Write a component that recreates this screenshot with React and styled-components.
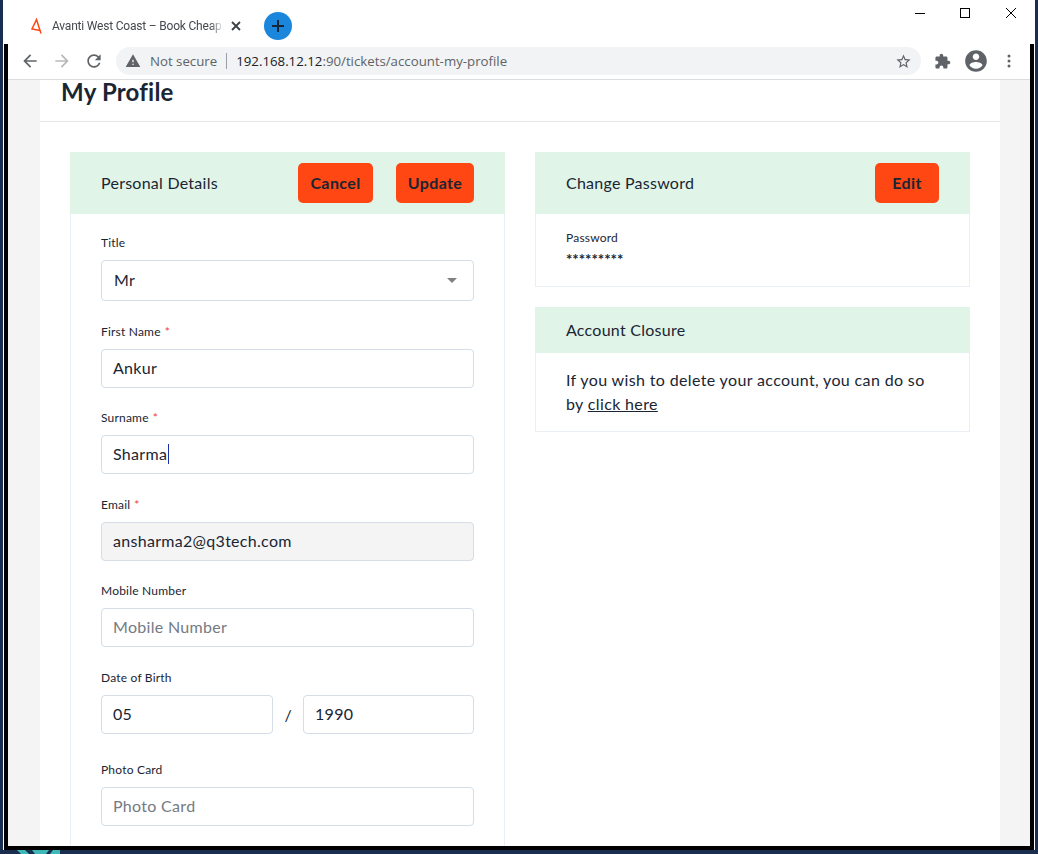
import React from "react";
import styled, { createGlobalStyle } from "styled-components";

const Global = createGlobalStyle`
  html, body { margin: 0; padding: 0; background: #1a2f4f; }
  * { box-sizing: border-box; }
`;

const ICONS = {
  back: "M20 11H7.83l5.59-5.59L12 4l-8 8 8 8 1.41-1.41L7.83 13H20v-2z",
  forward: "M12 4l-1.41 1.41L16.17 11H4v2h12.17l-5.58 5.59L12 20l8-8z",
  reload: "M17.65 6.35C16.2 4.9 14.21 4 12 4c-4.42 0-7.99 3.58-7.99 8s3.57 8 7.99 8c3.73 0 6.84-2.55 7.73-6h-2.08c-.82 2.33-3.04 4-5.65 4-3.31 0-6-2.69-6-6s2.69-6 6-6c1.66 0 3.14.69 4.22 1.78L13 11h7V4l-2.35 2.35z",
  warning: "M1 21h22L12 2 1 21zm12-3h-2v-2h2v2zm0-4h-2v-4h2v4z",
  star: "M22 9.24l-7.19-.62L12 2 9.19 8.63 2 9.24l5.46 4.73L5.82 21 12 17.27 18.18 21l-1.63-7.03L22 9.24zM12 15.4l-3.76 2.27 1-4.28-3.32-2.88 4.38-.38L12 6.1l1.71 4.04 4.38.38-3.32 2.88 1 4.28L12 15.4z",
  puzzle: "M20.5 11H19V7c0-1.1-.9-2-2-2h-4V3.5C13 2.12 11.88 1 10.5 1S8 2.12 8 3.5V5H4c-1.1 0-1.99.9-1.99 2v3.8H3.5c1.49 0 2.7 1.21 2.7 2.7s-1.21 2.7-2.7 2.7H2V20c0 1.1.9 2 2 2h3.8v-1.5c0-1.49 1.21-2.7 2.7-2.7 1.49 0 2.7 1.21 2.7 2.7V22H17c1.1 0 2-.9 2-2v-4h1.5c1.38 0 2.5-1.12 2.5-2.5S21.88 11 20.5 11z",
  account: "M12 2C6.48 2 2 6.48 2 12s4.48 10 10 10 10-4.48 10-10S17.52 2 12 2zm0 3c1.66 0 3 1.34 3 3s-1.34 3-3 3-3-1.34-3-3 1.34-3 3-3zm0 14.2c-2.5 0-4.71-1.28-6-3.22.03-1.99 4-3.08 6-3.08 1.99 0 5.97 1.09 6 3.08-1.29 1.94-3.5 3.22-6 3.22z",
};

const Glyph = ({ name, size = 20, color = "#5f6368" }) => (
  <svg width={size} height={size} viewBox="0 0 24 24" fill={color}>
    <path d={ICONS[name]} />
  </svg>
);

const Desktop = styled.div`
  width: 1038px;
  height: 854px;
  background: #1a2f4f;
  padding: 0 3px;
  overflow: hidden;
`;
const Win = styled.div`
  width: 1032px;
  height: 850px;
  background: #fff;
  padding: 0 1px;
  display: flex;
  flex-direction: column;
`;
const WallpaperStrip = styled.svg`
  display: block;
  margin-left: 14px;
`;
const TabStrip = styled.div`
  height: 44px;
  flex: none;
  display: flex;
  align-items: flex-start;
`;
const Tab = styled.div`
  height: 44px;
  margin-left: 25px;
  display: flex;
  align-items: center;
  padding-top: 8px;
`;
const TabTitle = styled.span`
  width: 172px;
  margin-left: 9px;
  font: 12px "Roboto", sans-serif;
  letter-spacing: -0.2px;
  color: #45494e;
  white-space: nowrap;
  overflow: hidden;
  -webkit-mask-image: linear-gradient(to right, #000 92%, transparent);
  mask-image: linear-gradient(to right, #000 92%, transparent);
`;
const TabClose = styled.svg`
  margin-left: 7px;
`;
const NewTab = styled.div`
  width: 28px;
  height: 28px;
  margin: 12px 0 0 23px;
  border-radius: 50%;
  background: #1a86dc;
  display: flex;
  align-items: center;
  justify-content: center;
`;
const WinControls = styled.div`
  margin-left: auto;
  display: flex;
  padding-top: 8px;
  padding-right: 18px;
  gap: 35px;
`;
const CloseControl = styled.svg`
  margin-left: 1px;
`;
const Frame = styled.div`
  flex: 1;
  min-height: 0;
  display: flex;
  flex-direction: column;
  border: 4px solid #000;
  border-top: none;
`;
const Toolbar = styled.div`
  height: 36px;
  flex: none;
  display: flex;
  align-items: flex-start;
  padding: 3px 5px 0 6px;
  border-bottom: 1px solid #dadce0;
`;
const IconSlot = styled.div`
  width: ${(p) => p.$w || 32}px;
  height: 28px;
  flex: none;
  display: flex;
  align-items: center;
  justify-content: center;
`;
const Omnibox = styled.div`
  flex: 1;
  height: 28px;
  margin: 0 5px 0 6px;
  padding: 0 9px 0 9px;
  border-radius: 14px;
  background: #f1f3f4;
  display: flex;
  align-items: center;
  font: 13.25px "Open Sans", sans-serif;
`;
const Security = styled.span`
  margin-left: 9px;
  color: #5f6368;
`;
const Divider = styled.span`
  width: 1px;
  height: 16px;
  background: #9aa0a6;
  margin: 0 9px;
`;
const Host = styled.span`
  color: #202124;
`;
const UrlRest = styled.span`
  color: #5f6368;
`;
const StarWrap = styled.div`
  margin-left: auto;
  display: flex;
`;
const Page = styled.main`
  flex: 1;
  min-height: 0;
  overflow: hidden;
  background: #f4f4f4;
  padding: 0 30px 0 32px;
  font-family: "Lato", sans-serif;
  color: #1a2533;
`;
const Card = styled.div`
  background: #fff;
  height: 100%;
`;
const PageHead = styled.h1`
  margin: 0;
  height: 42px;
  padding: 0 21px;
  font-size: 24px;
  line-height: 24px;
  font-weight: 700;
  letter-spacing: 0.2px;
  border-bottom: 1px solid #e6e6e6;
`;
const Columns = styled.div`
  display: grid;
  grid-template-columns: 435px 435px;
  gap: 30px;
  align-items: start;
  padding: 30px 30px 0;
`;
const Stack = styled.div`
  display: flex;
  flex-direction: column;
  gap: 20px;
`;
const PanelHead = styled.div`
  height: ${(p) => p.$h}px;
  background: #e1f4e8;
  display: flex;
  align-items: center;
  padding: 0 31px;
`;
const PanelTitle = styled.h2`
  margin: 0 auto 0 0;
  padding-bottom: 2px;
  font-size: 16px;
  font-weight: 400;
  letter-spacing: 0.25px;
`;
const Action = styled.button`
  height: 40px;
  width: ${(p) => p.$w}px;
  margin-left: ${(p) => p.$gap || 0}px;
  border: none;
  border-radius: 5px;
  background: #ff4713;
  color: #1a2533;
  font: 700 16px "Lato", sans-serif;
  letter-spacing: 0.4px;
  padding: 0 0 2px;
`;
const PanelBody = styled.div`
  border: 1px solid #e9eff5;
  border-top: none;
  padding: ${(p) => p.$pad};
`;
const Group = styled.div`
  margin-bottom: ${(p) => p.$mb ?? 21.5}px;
`;
const Label = styled.label`
  display: block;
  font-size: 12px;
  line-height: 18px;
  letter-spacing: 0.2px;
  margin-bottom: 8px;
`;
const Required = styled.span`
  color: #f03a3a;
  margin-left: 4px;
`;
const Field = styled.div`
  height: ${(p) => p.$h || 39}px;
  width: ${(p) => p.$w || "100%"};
  flex: ${(p) => (p.$grow ? 1 : "none")};
  border: 1px solid #d5dde6;
  border-radius: 4px;
  background: ${(p) => (p.$disabled ? "#f4f4f4" : "#fff")};
  color: ${(p) => (p.$placeholder ? "#757a82" : "#1a2533")};
  font-size: 16px;
  letter-spacing: 0.3px;
  padding: 0 11px 2px;
  display: flex;
  align-items: center;
`;
const SelectField = styled(Field)`
  padding: 0 16px 2px 12px;
  justify-content: space-between;
`;
const Arrow = styled.span`
  width: 0;
  height: 0;
  margin-top: 2px;
  border-left: 5.5px solid transparent;
  border-right: 5.5px solid transparent;
  border-top: 5px solid #808080;
`;
const Caret = styled.span`
  width: 1px;
  height: 20px;
  margin-left: 1px;
  background: #1c2fa8;
`;
const DateRow = styled.div`
  display: flex;
  align-items: center;
`;
const Slash = styled.span`
  width: 30px;
  flex: none;
  text-align: center;
  font-size: 16px;
`;
const SmallLabel = styled.div`
  font-size: 12px;
  line-height: 18px;
  letter-spacing: 0.2px;
`;
const Stars = styled.div`
  margin-top: 2px;
  font-size: 15px;
  line-height: 20px;
  font-weight: 700;
`;
const Para = styled.p`
  margin: 0;
  font-size: 16px;
  line-height: 24px;
  letter-spacing: 0.36px;
`;
const Link = styled.a`
  color: inherit;
  text-decoration: underline;
`;

export default function App() {
  return (
    <>
      <Global />
      <Desktop>
        <Win>
          <TabStrip>
            <Tab>
              <svg width="14" height="16" viewBox="0 0 14 16" fill="none" stroke="#ff4713" strokeWidth="1.5">
                <path d="M7.5 1.5 L3 11 L11 12.5 Z M11 12.5 L12 15.5" />
              </svg>
              <TabTitle>Avanti West Coast – Book Cheap Train Tickets</TabTitle>
              <TabClose width="10" height="10" viewBox="0 0 10 10" stroke="#3c4043" strokeWidth="1.8">
                <path d="M1 1 L9 9 M9 1 L1 9" />
              </TabClose>
            </Tab>
            <NewTab>
              <svg width="14" height="14" viewBox="0 0 14 14" stroke="#17263a" strokeWidth="2">
                <path d="M7 1 V13 M1 7 H13" />
              </svg>
            </NewTab>
            <WinControls>
              <svg width="10" height="10" viewBox="0 0 10 10" stroke="#000" strokeWidth="1"><path d="M0 5.5 H10" /></svg>
              <svg width="10" height="10" viewBox="0 0 10 10" fill="none" stroke="#000" strokeWidth="1"><rect x="0.5" y="0.5" width="9" height="9" /></svg>
              <CloseControl width="10" height="10" viewBox="0 0 10 10" stroke="#000" strokeWidth="1"><path d="M0 0 L10 10 M10 0 L0 10" /></CloseControl>
            </WinControls>
          </TabStrip>
          <Frame>
            <Toolbar>
              <IconSlot><Glyph name="back" /></IconSlot>
              <IconSlot><Glyph name="forward" color="#b6b8bb" /></IconSlot>
              <IconSlot><Glyph name="reload" /></IconSlot>
              <Omnibox>
                <Glyph name="warning" size={16} />
                <Security>Not secure</Security>
                <Divider />
                <Host>192.168.12.12</Host>
                <UrlRest>:90/tickets/account-my-profile</UrlRest>
                <StarWrap><Glyph name="star" size={17} /></StarWrap>
              </Omnibox>
              <IconSlot $w={33}><Glyph name="puzzle" size={17} /></IconSlot>
              <IconSlot $w={33}><Glyph name="account" size={26} /></IconSlot>
              <IconSlot $w={33}>
                <svg width="4" height="14" viewBox="0 0 4 14" fill="#5f6368">
                  <circle cx="2" cy="2" r="1.5" /><circle cx="2" cy="7" r="1.5" /><circle cx="2" cy="12" r="1.5" />
                </svg>
              </IconSlot>
            </Toolbar>
            <Page>
              <Card>
                <PageHead>My Profile</PageHead>
                <Columns>
                  <section>
                    <PanelHead $h={62}>
                      <PanelTitle>Personal Details</PanelTitle>
                      <Action $w={75}>Cancel</Action>
                      <Action $w={78} $gap={23}>Update</Action>
                    </PanelHead>
                    <PanelBody $pad="20px 30px 30px">
                      <Group>
                        <Label>Title</Label>
                        <SelectField $h={41}>Mr<Arrow /></SelectField>
                      </Group>
                      <Group>
                        <Label>First Name<Required>*</Required></Label>
                        <Field>Ankur</Field>
                      </Group>
                      <Group>
                        <Label>Surname<Required>*</Required></Label>
                        <Field>Sharma<Caret /></Field>
                      </Group>
                      <Group>
                        <Label>Email<Required>*</Required></Label>
                        <Field $disabled>ansharma2@q3tech.com</Field>
                      </Group>
                      <Group>
                        <Label>Mobile Number</Label>
                        <Field $placeholder>Mobile Number</Field>
                      </Group>
                      <Group $mb={27}>
                        <Label>Date of Birth</Label>
                        <DateRow>
                          <Field $w="172px">05</Field>
                          <Slash>/</Slash>
                          <Field $grow>1990</Field>
                        </DateRow>
                      </Group>
                      <Group>
                        <Label>Photo Card</Label>
                        <Field $placeholder>Photo Card</Field>
                      </Group>
                    </PanelBody>
                  </section>
                  <Stack>
                    <section>
                      <PanelHead $h={62}>
                        <PanelTitle>Change Password</PanelTitle>
                        <Action $w={64}>Edit</Action>
                      </PanelHead>
                      <PanelBody $pad="15px 30px 17px">
                        <SmallLabel>Password</SmallLabel>
                        <Stars>*********</Stars>
                      </PanelBody>
                    </section>
                    <section>
                      <PanelHead $h={46}>
                        <PanelTitle>Account Closure</PanelTitle>
                      </PanelHead>
                      <PanelBody $pad="15px 30px 15px">
                        <Para>If you wish to delete your account, you can do so by <Link>click here</Link></Para>
                      </PanelBody>
                    </section>
                  </Stack>
                </Columns>
              </Card>
            </Page>
          </Frame>
        </Win>
        <WallpaperStrip width="46" height="4" viewBox="0 0 46 4" fill="#3fb8b8">
          <path d="M0 0 H8 L12 4 H4 Z M15 0 H32 L29 4 H18 Z M36 0 H43 L43 4 H33 Z" />
        </WallpaperStrip>
      </Desktop>
    </>
  );
}
